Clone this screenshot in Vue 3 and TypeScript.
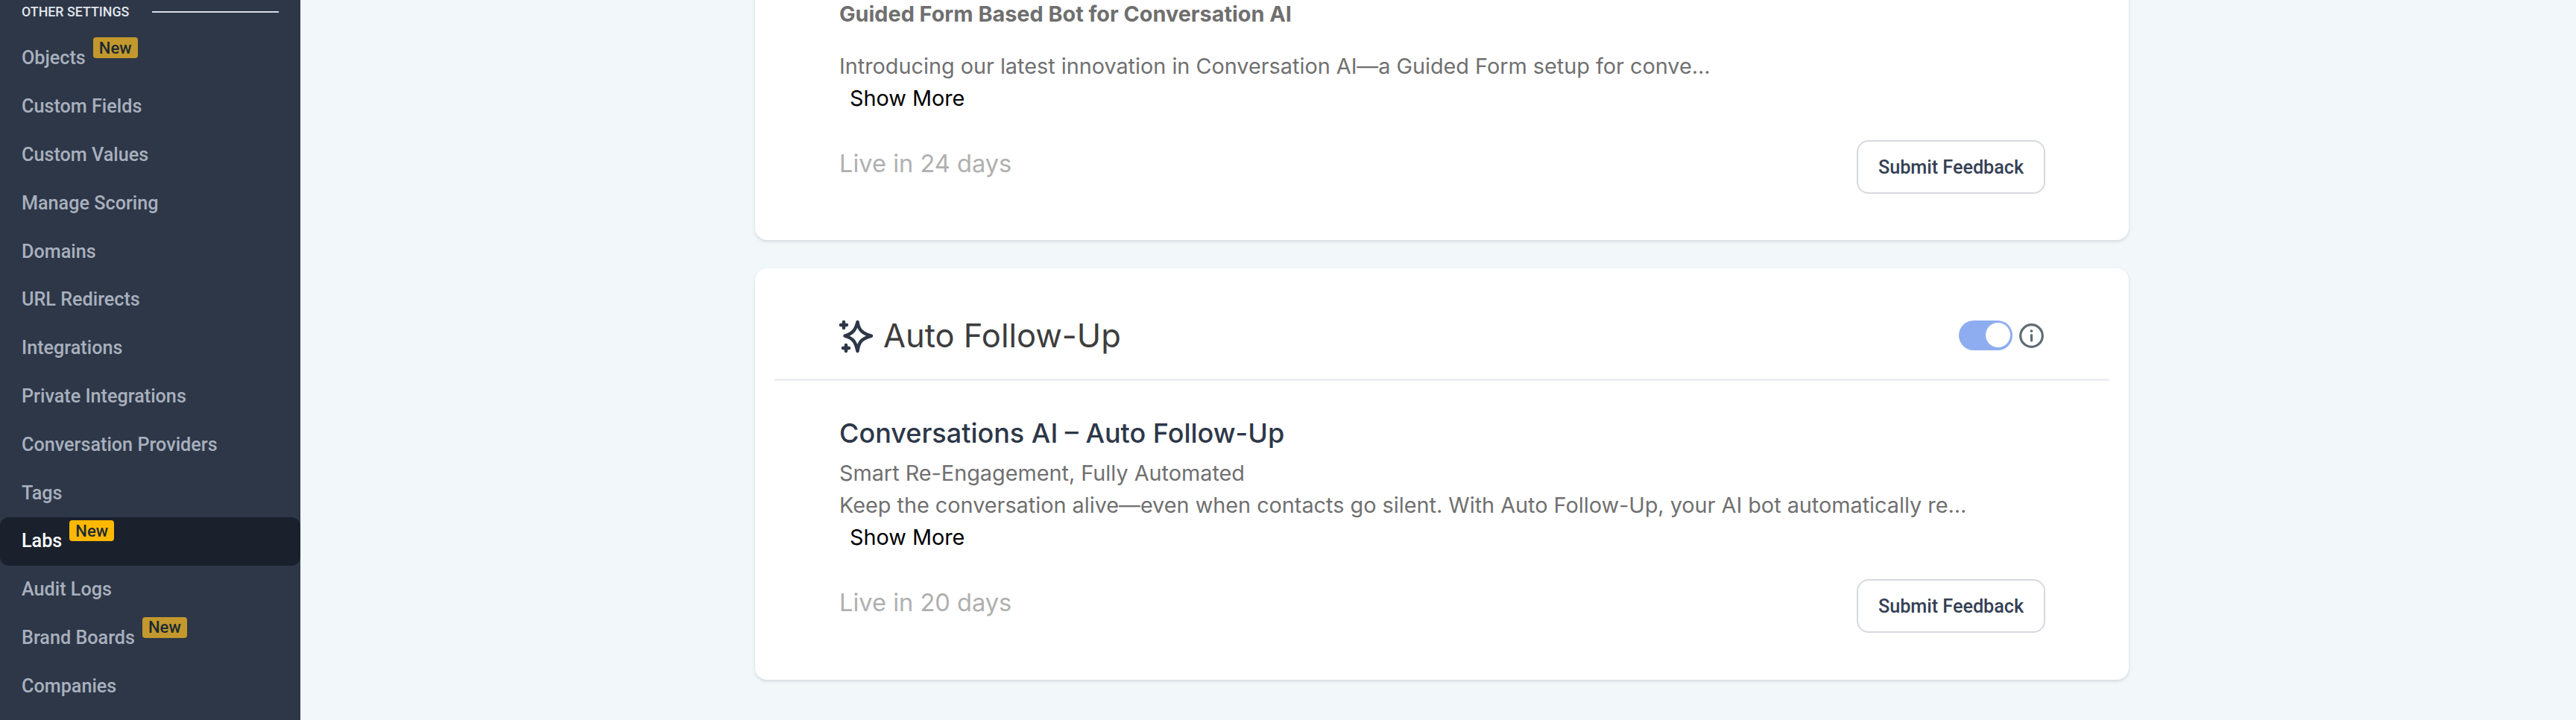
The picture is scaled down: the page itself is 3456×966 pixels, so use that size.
<script setup lang="ts">
interface NavItem {
  label: string
  badge?: boolean
  active?: boolean
}

const navItems: NavItem[] = [
  { label: 'Objects', badge: true },
  { label: 'Custom Fields' },
  { label: 'Custom Values' },
  { label: 'Manage Scoring' },
  { label: 'Domains' },
  { label: 'URL Redirects' },
  { label: 'Integrations' },
  { label: 'Private Integrations' },
  { label: 'Conversation Providers' },
  { label: 'Tags' },
  { label: 'Labs', badge: true, active: true },
  { label: 'Audit Logs' },
  { label: 'Brand Boards', badge: true },
  { label: 'Companies' }
]
</script>

<template>
  <div class="page">
    <aside class="sidebar">
      <div class="section-title">
        <span>OTHER SETTINGS</span>
        <i class="section-line"></i>
      </div>
      <a
        v-for="item in navItems"
        :key="item.label"
        class="nav-item"
        :class="{ active: item.active }"
      >
        <span class="nav-label">{{ item.label }}</span>
        <span v-if="item.badge" class="badge">New</span>
      </a>
    </aside>

    <main class="content">
      <section class="card card-first">
        <h3 class="form-title">Guided Form Based Bot for Conversation AI</h3>
        <p class="desc desc-first">Introducing our latest innovation in Conversation AI—a Guided Form setup for conve...</p>
        <button class="show-more">Show More</button>
        <div class="card-foot">
          <span class="live">Live in 24 days</span>
          <button class="feedback">Submit Feedback</button>
        </div>
      </section>

      <section class="card">
        <header class="card-head">
          <div class="head-left">
            <svg class="sparkle" viewBox="0 0 48 48" fill="none" stroke="#2d3748" stroke-width="4.500" stroke-linecap="round" stroke-linejoin="round">
              <path d="M24.500 6 C26 16 30 21 43 24.700 C30 28 26 33 24.500 45 C22 33 19 28 7.500 24.700 C19 21 22 16 24.500 6 Z" />
              <path d="M6 6 V14 M2 10 H10" />
              <path d="M9 37 V45 M5 41 H13" />
            </svg>
            <h2 class="card-title">Auto Follow-Up</h2>
          </div>
          <div class="head-right">
            <span class="toggle"><i class="knob"></i></span>
            <svg class="info" viewBox="0 0 33 33" fill="none" stroke="#5f6c72" stroke-width="3.200" stroke-linecap="round">
              <circle cx="16.500" cy="16.500" r="14.800" />
              <path d="M16.500 15.500 V23" />
              <path d="M16.500 10 V10.200" stroke-width="3.600" />
            </svg>
          </div>
        </header>
        <div class="card-body">
          <h3 class="feature-title">Conversations AI – Auto Follow-Up</h3>
          <p class="desc">Smart Re-Engagement, Fully Automated</p>
          <p class="desc">Keep the conversation alive—even when contacts go silent. With Auto Follow-Up, your AI bot automatically re...</p>
          <button class="show-more">Show More</button>
          <div class="card-foot">
            <span class="live">Live in 20 days</span>
            <button class="feedback">Submit Feedback</button>
          </div>
        </div>
      </section>
    </main>
  </div>
</template>

<style>
html,
body {
  margin: 0;
  overflow: hidden;
}
</style>

<style scoped>
.page {
  display: flex;
  height: 966px;
  width: 3456px;
  overflow: hidden;
  background: #f2f7fa;
  font-family: Inter, "Liberation Sans", sans-serif;
}

.sidebar {
  width: 403px;
  flex-shrink: 0;
  background: #2d3748;
  display: flex;
  flex-direction: column;
}

.section-title {
  height: 30px;
  margin-bottom: 16px;
  flex-shrink: 0;
  display: flex;
  align-items: center;
  padding-left: 29px;
  white-space: nowrap;
  font-family: Roboto, sans-serif;
  font-size: 17.800px;
  font-weight: 500;
  color: #e2e6ec;
}

.section-line {
  width: 170px;
  height: 2px;
  flex-shrink: 0;
  margin-left: 31px;
  margin-top: 2px;
  background: #d7dce3;
}

.nav-item {
  height: 64.800px;
  flex-shrink: 0;
  display: flex;
  align-items: center;
  padding-left: 29px;
  border-radius: 12px;
  font-family: Roboto, sans-serif;
  font-size: 25.200px;
  font-weight: 500;
  color: #a9b0bd;
}

.nav-item.active {
  background: #1a202c;
  color: #fff;
}

.nav-label {
  line-height: 32px;
}

.badge {
  margin-left: 10px;
  margin-top: -28px;
  height: 28px;
  padding: 0 8px;
  display: flex;
  align-items: center;
  border-radius: 4px;
  background: #c3982d;
  color: #1a2a33;
  font-size: 22px;
}

.nav-item.active .badge {
  background: #ffb800;
}

.content {
  flex: 1;
  min-width: 0;
  display: flex;
  flex-direction: column;
  justify-content: flex-end;
  gap: 38px;
  padding: 0 600px 54px 610px;
}

.card {
  flex-shrink: 0;
  background: #fff;
  border-radius: 16px;
  box-shadow: 0 2px 4px rgba(45, 55, 72, 0.16);
}

.card-first {
  padding: 100px 112px 62px 113px;
}

.card-head {
  box-sizing: border-box;
  height: 151px;
  margin: 0 26px;
  padding: 32px 88px 0 87px;
  display: flex;
  align-items: center;
  justify-content: space-between;
  border-bottom: 3px solid #eceef2;
}

.head-left,
.head-right {
  display: flex;
  align-items: center;
}

.sparkle {
  width: 48px;
  height: 48px;
  margin-right: 11px;
}

.card-title {
  margin: 0;
  font-size: 43.500px;
  font-weight: 400;
  color: #3d3d3d;
}

.toggle {
  width: 72px;
  height: 40px;
  border-radius: 20px;
  background: #8eadf1;
  position: relative;
}

.knob {
  position: absolute;
  top: 3px;
  right: 3px;
  width: 33px;
  height: 33px;
  border-radius: 50%;
  background: #fff;
}

.info {
  width: 33px;
  height: 33px;
  margin-left: 9px;
}

.card-body {
  padding: 48px 112px 63px 113px;
}

.feature-title {
  margin: 0 0 10px;
  font-size: 36px;
  font-weight: 500;
  color: #2d3748;
}

.form-title {
  margin: 0;
  font-size: 28.800px;
  font-weight: 700;
  color: #6f6f6f;
}

.desc {
  margin: 0;
  font-size: 28.800px;
  line-height: 43px;
  color: #707070;
}

.desc-first {
  margin-top: 31px;
}

.show-more {
  display: block;
  padding: 0 14px;
  border: 0;
  background: none;
  font-family: Inter, sans-serif;
  font-size: 28.800px;
  line-height: 44px;
  color: #000;
}

.card-foot {
  display: flex;
  justify-content: space-between;
  align-items: flex-start;
  margin-top: 34px;
}

.live {
  margin-top: 9px;
  font-size: 32.600px;
  line-height: 44px;
  color: #b0b0b0;
}

.feedback {
  width: 253px;
  height: 72px;
  border: 2px solid #d6d9e0;
  border-radius: 16px;
  background: #fff;
  font-family: Roboto, sans-serif;
  font-size: 25.200px;
  font-weight: 500;
  color: #344054;
}
</style>
